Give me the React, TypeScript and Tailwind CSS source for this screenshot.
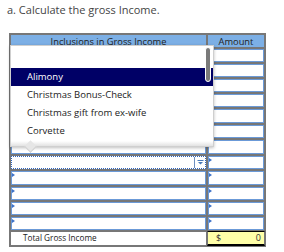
const rowHeights = [
  'h-[15px]', 'h-[15px]', 'h-[15px]', 'h-[15px]', 'h-[16px]', 'h-[15px]',
  'h-[16px]', 'h-[15px]', 'h-[16px]', 'h-[15px]', 'h-[15px]', 'h-[15px]'
]

const options = ['', 'Alimony', 'Christmas Bonus-Check', 'Christmas gift from ex-wife', 'Corvette']

function Mark() {
  return (
    <span className="absolute left-0 top-[1px] w-0 h-0 border-t-[2px] border-b-[2px] border-l-[3px] border-t-transparent border-b-transparent border-l-[#3d72c8]" />
  )
}

function InputCell({ mark }: { mark?: boolean }) {
  return (
    <div className="relative h-full border border-[#6b9ad8] bg-white">
      {mark && <Mark />}
    </div>
  )
}

function SelectCell() {
  return (
    <div className="flex h-full border border-dotted border-[#2f66c0] bg-white">
      <div className="flex-1" />
      <div className="w-[11px] border-l border-[#6d8fc0] flex items-center justify-center">
        <svg width="7" height="5" viewBox="0 0 7 5">
          <rect x="0.5" y="0" width="6" height="1" fill="#4a7ab8" />
          <path d="M1 2 L6 2 L3.5 4.5 Z" fill="#4a7ab8" />
        </svg>
      </div>
    </div>
  )
}

function Dropdown() {
  return (
    <div className="absolute left-0 top-[11px] w-[204px] h-[102px] bg-white border border-[#cfcfcf] shadow-[0_1px_3px_rgba(0,0,0,0.25)]">
      <div className="pt-[4px]">
        {options.map((o, i) => (
          <div
            key={i}
            className={
              i === 1
                ? 'h-[18px] pl-[16px] flex items-center bg-[#000066] text-white text-[9.5px]'
                : 'h-[18px] pl-[16px] flex items-center text-[#222] text-[9.5px]'
            }
          >
            {o}
          </div>
        ))}
      </div>
      <div className="absolute right-[2px] top-[1px] w-[6px] h-[35px] rounded-full bg-[#7a7a7a] border border-white" />
      <div className="absolute left-0 right-0 bottom-0 h-[5px] bg-gradient-to-b from-white to-[#e2e2e2]" />
      <div className="absolute left-[15px] bottom-[-5px] w-[9px] h-[9px] rotate-45 bg-[#e6e6e6] border-r border-b border-[#d0d0d0]" />
    </div>
  )
}

export default function App() {
  return (
    <div className="w-[284px] h-[252px] bg-white font-['Open_Sans',sans-serif]">
      <p className="pl-[7px] pt-[3px] h-[33px] text-[11px] leading-[14px] text-[#444]">
        a. Calculate the gross Income.
      </p>
      <div className="relative ml-[9px] w-[257px] border border-[#777]">
        <div className="flex h-[14px] bg-[#7cafe5] text-[9.3px] text-[#222]">
          <div className="w-[197px] border border-[#777] flex items-center justify-center leading-none pt-[1px]">
            Inclusions in Gross Income
          </div>
          <div className="w-[58px] border border-[#777] flex items-center justify-center leading-none pt-[1px]">
            Amount
          </div>
        </div>
        {rowHeights.map((h, i) => (
          <div key={i} className={`flex ${h}`}>
            <div className="w-[197px] border border-[#777]">
              {i === 7 ? <SelectCell /> : <InputCell mark={i > 7} />}
            </div>
            <div className="w-[58px] border border-[#777]">
              <InputCell mark={i >= 7} />
            </div>
          </div>
        ))}
        <div className="flex h-[15px] text-[8.2px] text-[#222]">
          <div className="w-[197px] border border-[#777] bg-white flex items-center pl-[12px]">
            Total Gross Income
          </div>
          <div className="w-[58px] border-x border-x-[#777] border-t border-t-black border-b-2 border-b-black bg-[#ffffa8] flex items-center justify-between pl-[8px] pr-[3px] text-[9px] text-[#333]">
            <span>$</span>
            <span>0</span>
          </div>
        </div>
        <Dropdown />
      </div>
    </div>
  )
}
